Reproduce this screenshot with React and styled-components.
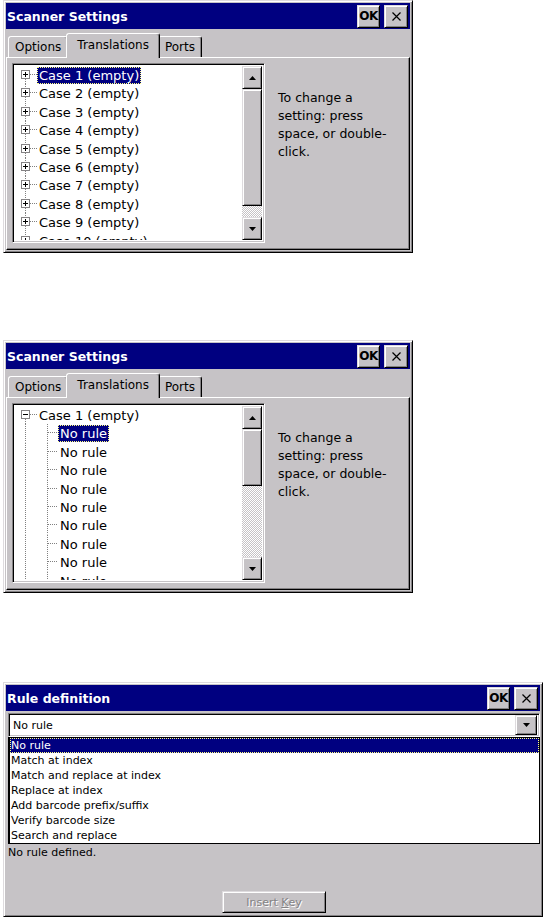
import React from 'react';
import styled, { createGlobalStyle, css } from 'styled-components';

const GRAY = '#c6c3c6';
const DARK = '#848284';
const NAVY = '#000080';

const GlobalStyle = createGlobalStyle`
	html, body {
		margin: 0;
		padding: 0;
		background: #fff;
	}
	body {
		font-family: "DejaVu Sans", Verdana, sans-serif;
		color: #000;
	}
`;

const raised = css`
	border: 1px solid;
	border-color: #dedbde #000 #000 #dedbde;
	box-shadow: inset 1px 1px #fff, inset -1px -1px ${DARK};
`;

const sunken = css`
	border: 1px solid;
	border-color: ${DARK} #fff #fff ${DARK};
	box-shadow: inset 1px 1px #000, inset -1px -1px ${GRAY};
`;

const Page = styled.div`
	width: 545px;
	height: 919px;
	box-sizing: border-box;
	padding-left: 3px;
	display: flex;
	flex-direction: column;
	align-items: flex-start;
	overflow: hidden;
`;

const Frame = styled.div`
	${raised}
	box-sizing: border-box;
	width: ${props => props.$w}px;
	height: ${props => props.$h}px;
	margin-top: ${props => props.$top}px;
	padding: 2px;
	background: ${GRAY};
	display: flex;
	flex-direction: column;
	flex: none;
`;

const TitleBar = styled.div`
	flex: none;
	height: 26px;
	background: ${NAVY};
	display: flex;
	align-items: center;
	justify-content: space-between;
	padding: 0 2px 0 1px;
`;

const Title = styled.span`
	color: #fff;
	font-weight: bold;
	font-size: 12.5px;
`;

const CapButtons = styled.div`
	display: flex;
	gap: 4px;
`;

const CapButton = styled.div`
	${raised}
	box-sizing: border-box;
	width: ${props => props.$w}px;
	height: 23px;
	background: ${GRAY};
	display: flex;
	align-items: center;
	justify-content: center;
	font-weight: bold;
	font-size: 12px;
	letter-spacing: -0.5px;
`;

const TabRow = styled.div`
	flex: none;
	height: 24px;
	margin-top: 4px;
	padding-left: 2px;
	display: flex;
	align-items: flex-end;
	position: relative;
	z-index: 1;
`;

const Tab = styled.div`
	box-sizing: border-box;
	height: 21px;
	padding: 0 6px;
	background: ${GRAY};
	border: 1px solid;
	border-bottom: none;
	border-color: #fff #000 transparent #fff;
	box-shadow: inset -1px 0 ${DARK};
	border-radius: 3px 3px 0 0;
	display: flex;
	align-items: center;
	font-size: 12px;
	${props =>
		props.$active &&
		css`
			height: 25px;
			padding: 0 10px 3px;
			margin: 0 -2px -1px;
			position: relative;
			z-index: 1;
		`}
`;

const Panel = styled.div`
	flex: 1;
	min-height: 0;
	border: 1px solid;
	border-color: #fff #000 #000 #fff;
	box-shadow: inset -1px -1px ${DARK};
	display: flex;
	align-items: flex-start;
	padding: 5px 0 0 5px;
`;

const TreeBox = styled.div`
	${sunken}
	box-sizing: border-box;
	width: 253px;
	height: 180px;
	background: #fff;
	display: flex;
	padding: 2px;
`;

const TreeList = styled.div`
	flex: 1;
	overflow: hidden;
`;

const Row = styled.div`
	display: flex;
	align-items: flex-start;
	height: 18.4px;
	white-space: nowrap;
`;

const Label = styled.span`
	box-sizing: border-box;
	margin-top: 1px;
	height: 17px;
	line-height: 17px;
	padding: 0 2px;
	font-size: 13px;
	${props =>
		props.$selected &&
		css`
			background: ${NAVY};
			color: #fff;
			outline: 1px dotted #ffff80;
			outline-offset: -1px;
		`}
`;

const ScrollBar = styled.div`
	width: 20px;
	flex: none;
	display: flex;
	flex-direction: column;
`;

const ScrollButton = styled.div`
	${raised}
	box-sizing: border-box;
	flex: none;
	height: 23px;
	background: ${GRAY};
	display: flex;
	align-items: center;
	justify-content: center;
`;

const Thumb = styled.div`
	${raised}
	box-sizing: border-box;
	flex: none;
	height: ${props => props.$size}px;
	background: ${GRAY};
`;

const Track = styled.div`
	flex: 1;
	background-color: #fff;
	background-image: repeating-conic-gradient(${GRAY} 0% 25%, #fff 0% 50%);
	background-size: 2px 2px;
`;

const Hint = styled.div`
	margin: 26px 0 0 13px;
	font-size: 12.5px;
	line-height: 18px;
`;

const RuleBody = styled.div`
	flex: 1;
	display: flex;
	flex-direction: column;
	padding: 2px 0 1px 2px;
`;

const Combo = styled.div`
	${sunken}
	box-sizing: border-box;
	flex: none;
	height: 24px;
	background: #fff;
	display: flex;
	align-items: center;
	justify-content: space-between;
	padding: 0 2px 0 4px;
	font-size: 11px;
`;

const ComboButton = styled.div`
	${raised}
	box-sizing: border-box;
	width: 22px;
	height: 20px;
	background: ${GRAY};
	display: flex;
	align-items: center;
	justify-content: center;
`;

const DropList = styled.div`
	box-sizing: border-box;
	flex: none;
	height: 107px;
	border: 1px solid #000;
	border-left-width: 2px;
	background: #fff;
	display: flex;
	flex-direction: column;
`;

const Option = styled.div`
	box-sizing: border-box;
	height: 15px;
	line-height: 15px;
	padding-left: 1px;
	font-size: 11px;
	${props =>
		props.$selected &&
		css`
			background: ${NAVY};
			color: #fff;
			outline: 1px dotted #ffff80;
			outline-offset: -1px;
		`}
`;

const Status = styled.div`
	margin-top: 2px;
	font-size: 11px;
	line-height: 14px;
`;

const Footer = styled.div`
	margin-top: auto;
	display: flex;
	justify-content: center;
`;

const PushButton = styled.div`
	${raised}
	box-sizing: border-box;
	width: 104px;
	height: 22px;
	background: ${GRAY};
	display: flex;
	align-items: center;
	justify-content: center;
	font-size: 11px;
	color: ${DARK};
	text-shadow: 1px 1px #fff;
`;

const Arrow = ({ down }) => (
	<svg width="7" height="4" viewBox="0 0 7 4">
		<polygon points={down ? '0,0 7,0 3.5,4' : '0,4 7,4 3.5,0'} fill="#000" />
	</svg>
);

const CloseGlyph = () => (
	<svg width="9" height="9" viewBox="0 0 9 9">
		<path d="M0.5 0.5 L8.5 8.5 M8.5 0.5 L0.5 8.5" stroke="#000" strokeWidth="1.2" />
	</svg>
);

const dots = { stroke: '#808080', strokeWidth: 1, strokeDasharray: '1 1' };

// expand box with the tree lines around it
const CaseGutter = ({ open, topLine }) => (
	<svg width="22" height="18.4" style={{ flex: 'none', display: 'block' }}>
		{topLine && <line x1="10.5" y1="0" x2="10.5" y2="4" {...dots} />}
		<line x1="10.5" y1="13" x2="10.5" y2="18.4" {...dots} />
		<line x1="15" y1="8.5" x2="22" y2="8.5" {...dots} />
		<rect x="6.5" y="4.5" width="8" height="8" fill="#fff" stroke={DARK} />
		<line x1="8" y1="8.5" x2="13" y2="8.5" stroke="#000" />
		{!open && <line x1="10.5" y1="6" x2="10.5" y2="11" stroke="#000" />}
	</svg>
);

const RuleGutter = () => (
	<svg width="43" height="18.4" style={{ flex: 'none', display: 'block' }}>
		<line x1="10.5" y1="0" x2="10.5" y2="18.4" {...dots} />
		<line x1="32.5" y1="0" x2="32.5" y2="18.4" {...dots} />
		<line x1="33" y1="8.5" x2="43" y2="8.5" {...dots} />
	</svg>
);

const Caption = ({ title }) => (
	<TitleBar>
		<Title>{title}</Title>
		<CapButtons>
			<CapButton $w={23}>OK</CapButton>
			<CapButton $w={24}>
				<CloseGlyph />
			</CapButton>
		</CapButtons>
	</TitleBar>
);

const Scroller = ({ thumb }) => (
	<ScrollBar>
		<ScrollButton>
			<Arrow />
		</ScrollButton>
		<Thumb $size={thumb} />
		<Track />
		<ScrollButton>
			<Arrow down />
		</ScrollButton>
	</ScrollBar>
);

const SettingsDialog = ({ top, thumb, children }) => (
	<Frame $w={410} $h={253} $top={top}>
		<Caption title="Scanner Settings" />
		<TabRow>
			<Tab>Options</Tab>
			<Tab $active>Translations</Tab>
			<Tab>Ports</Tab>
		</TabRow>
		<Panel>
			<TreeBox>
				<TreeList>{children}</TreeList>
				<Scroller thumb={thumb} />
			</TreeBox>
			<Hint>
				To change a
				<br />
				setting: press
				<br />
				space, or double-
				<br />
				click.
			</Hint>
		</Panel>
	</Frame>
);

const cases = Array.from({ length: 10 }, (_, i) => `Case ${i + 1} (empty)`);
const rules = [
	'No rule',
	'Match at index',
	'Match and replace at index',
	'Replace at index',
	'Add barcode prefix/suffix',
	'Verify barcode size',
	'Search and replace'
];

const App = () => (
	<Page>
		<GlobalStyle />
		<SettingsDialog top={0} thumb={117}>
			{cases.map((c, i) => (
				<Row key={c}>
					<CaseGutter topLine={i > 0} />
					<Label $selected={i === 0}>{c}</Label>
				</Row>
			))}
		</SettingsDialog>

		<SettingsDialog top={87} thumb={57}>
			<Row>
				<CaseGutter open />
				<Label>Case 1 (empty)</Label>
			</Row>
			{Array.from({ length: 9 }, (_, i) => (
				<Row key={i}>
					<RuleGutter />
					<Label $selected={i === 0}>No rule</Label>
				</Row>
			))}
		</SettingsDialog>

		<Frame $w={540} $h={235} $top={89}>
			<Caption title="Rule definition" />
			<RuleBody>
				<Combo>
					<span>No rule</span>
					<ComboButton>
						<Arrow down />
					</ComboButton>
				</Combo>
				<DropList>
					{rules.map((r, i) => (
						<Option key={r} $selected={i === 0}>
							{r}
						</Option>
					))}
				</DropList>
				<Status>No rule defined.</Status>
				<Footer>
					<PushButton>
						Insert&nbsp;<u>K</u>ey
					</PushButton>
				</Footer>
			</RuleBody>
		</Frame>
	</Page>
);

export default App;
